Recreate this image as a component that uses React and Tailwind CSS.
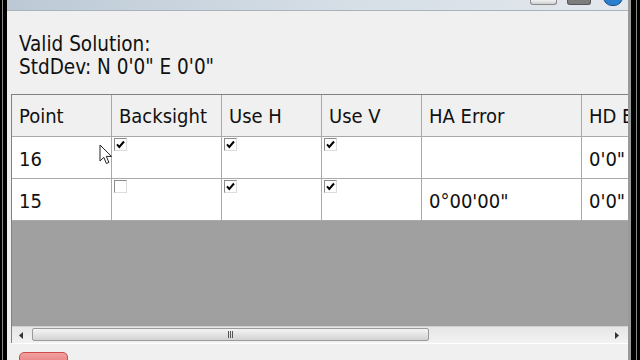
import React from "react";

const font = { fontFamily: '"DejaVu Sans Condensed", "DejaVu Sans", sans-serif' };

function Check({ checked }) {
  return (
    <div className="absolute left-[2px] top-[1px] w-[13px] h-[13px] border border-[#8c8c8c] bg-white border-r-[#dcdcdc] border-b-[#dcdcdc]">
      {checked && (
        <svg width="11" height="11" viewBox="0 0 11 11" className="absolute left-0 top-0">
          <path d="M2 5.3 L4.3 8 L9 2.5" fill="none" stroke="#000" strokeWidth="2" />
        </svg>
      )}
    </div>
  );
}

const cols = [
  { name: "Point", w: "w-[100px]" },
  { name: "Backsight", w: "w-[110px]" },
  { name: "Use H", w: "w-[100px]" },
  { name: "Use V", w: "w-[100px]" },
  { name: "HA Error", w: "w-[160px]" },
  { name: "HD Error", w: "w-[100px]" },
];

const rows = [
  ["16", true, true, true, "", "0'0\""],
  ["15", false, true, true, "0°00'00\"", "0'0\""],
];

function Cell({ w, children, header }) {
  return (
    <div
      className={`relative shrink-0 ${w} h-full flex items-center pl-[7px] whitespace-nowrap border-r border-[#a9a9a9] ${
        header ? "bg-[#f0f0f0]" : "bg-white"
      }`}
    >
      {children}
    </div>
  );
}

export default function App() {
  return (
    <div className="w-[640px] h-[360px] overflow-hidden bg-black flex text-[#111]" style={font}>
      {/* left frame */}
      <div className="w-[2px] bg-black" />
      <div className="w-[1px] bg-[#8a8a8a]" />
      <div className="w-[4px] bg-black" />
      {/* window */}
      <div className="flex-1 min-w-0 flex flex-col bg-[#f0f0f0]">
        {/* title bar */}
        <div className="relative h-[11px] shrink-0 bg-gradient-to-r from-[#bcc9d5] via-[#d4dde5] to-[#e3e8ed] border-b border-[#a8b3bd]">
          <div className="absolute left-[523px] top-0 w-[27px] h-[5px] rounded-b-[3px] bg-gradient-to-b from-[#f2f2f2] to-[#cfcfcf] border border-t-0 border-[#8a8a8a]" />
          <div className="absolute left-[560px] top-0 w-[24px] h-[5px] rounded-b-[3px] bg-[#7d7d7d] border border-t-0 border-[#555]" />
          <div className="absolute left-[596px] top-[-12px] w-[20px] h-[18px] rounded-full bg-[#2a7fd0] border border-[#1a4f8a]" />
        </div>
        {/* body */}
        <div className="flex-1 flex flex-col pl-[4px]">
          <div className="pl-[8px] pt-[22px] h-[83px] text-[20.5px] leading-[23px] shrink-0">
            <div>Valid Solution:</div>
            <div>StdDev: N 0'0" E 0'0"</div>
          </div>
          {/* grid */}
          <div className="relative h-[249px] shrink-0 flex flex-col border-t border-l border-[#828282] bg-[#a0a0a0] overflow-hidden">
            <div className="flex h-[42px] shrink-0 border-b border-[#a9a9a9] text-[20px]">
              {cols.map((c, i) => (
                <Cell key={i} w={c.w} header>
                  {c.name}
                </Cell>
              ))}
            </div>
            {rows.map((r, ri) => (
              <div key={ri} className="flex h-[42px] shrink-0 border-b border-[#a9a9a9] text-[20px]">
                <Cell w={cols[0].w}>
                  <span className="pt-[3px]">{r[0]}</span>
                </Cell>
                <Cell w={cols[1].w}>
                  <Check checked={r[1]} />
                </Cell>
                <Cell w={cols[2].w}>
                  <Check checked={r[2]} />
                </Cell>
                <Cell w={cols[3].w}>
                  <Check checked={r[3]} />
                </Cell>
                <Cell w={cols[4].w}>
                  <span className="pt-[3px]">{r[4]}</span>
                </Cell>
                <Cell w={cols[5].w}>
                  <span className="pt-[3px]">{r[5]}</span>
                </Cell>
              </div>
            ))}
            <div className="flex-1" />
            {/* scrollbar */}
            <div className="relative h-[17px] shrink-0 flex items-center bg-gradient-to-b from-[#e6e6e6] to-[#f2f2f2] border-t border-[#d0d0d0]">
              <svg width="4" height="7" viewBox="0 0 4 7" className="absolute left-[7px] top-[5px]">
                <path d="M4 0 L0 3.5 L4 7 Z" fill="#333" />
              </svg>
              <div className="absolute left-[20px] top-[1px] w-[397px] h-[13px] rounded-[2px] border border-[#9a9a9a] bg-gradient-to-b from-[#f4f4f4] via-[#e4e4e4] to-[#d2d2d2] flex items-center justify-center">
                <div className="flex gap-[1px]">
                  <div className="w-[1px] h-[7px] bg-[#555]" />
                  <div className="w-[1px] h-[7px] bg-[#555]" />
                  <div className="w-[1px] h-[7px] bg-[#555]" />
                </div>
              </div>
              <svg width="4" height="7" viewBox="0 0 4 7" className="absolute left-[603px] top-[5px]">
                <path d="M0 0 L4 3.5 L0 7 Z" fill="#333" />
              </svg>
            </div>
            {/* cursor */}
            <svg width="15" height="21" viewBox="0 0 15 21" className="absolute left-[87px] top-[49px]">
              <path d="M1 1 L1 17 L4.8 13.3 L7.4 19.5 L9.9 18.4 L7.3 12.4 L12.5 12.4 Z" fill="#fff" stroke="#222" strokeWidth="1" strokeLinejoin="round" />
            </svg>
          </div>
          <div className="h-[1px] bg-white shrink-0" />
          <div className="relative flex-1">
            <div className="absolute left-[8px] top-[8px] w-[49px] h-[20px] rounded-[5px] border border-[#d04a4a] bg-gradient-to-b from-[#f2a0a0] to-[#e06a6a]" />
          </div>
        </div>
      </div>
      {/* right frame */}
      <div className="w-[3px] bg-[#9a9a9a]" />
      <div className="w-[5px] bg-black" />
      <div className="w-[1px] bg-[#888]" />
      <div className="w-[3px] bg-black" />
    </div>
  );
}
